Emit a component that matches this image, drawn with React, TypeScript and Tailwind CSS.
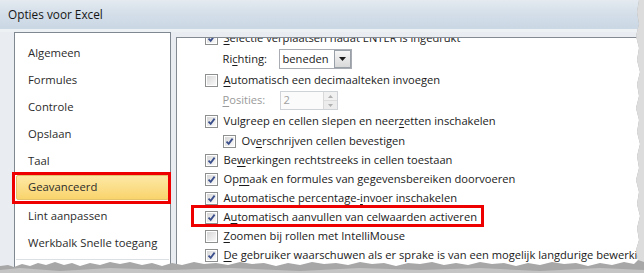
import React from "react";

function Check({ checked }: { checked: boolean }) {
  return (
    <div className="w-[13px] h-[13px] border border-[#8e8f8f] bg-white p-[1px] shrink-0">
      <div className="w-full h-full bg-gradient-to-br from-[#d7d7d7] to-[#fafafa] relative">
        {checked && (
          <svg viewBox="0 0 9 9" className="absolute inset-0 w-[9px] h-[9px]">
            <path d="M1.5 4.6 L3.7 6.8 L7.6 1.6" fill="none" stroke="#3b4f8c" strokeWidth="1.8" />
          </svg>
        )}
      </div>
    </div>
  );
}

function Row({
  checked,
  h,
  indent,
  children,
}: {
  checked: boolean;
  h: string;
  indent?: boolean;
  children: React.ReactNode;
}) {
  return (
    <div className={`flex items-center ${h} ${indent ? "pl-[46px]" : "pl-[28px]"}`}>
      <Check checked={checked} />
      <div className="pl-[6px] whitespace-nowrap">{children}</div>
    </div>
  );
}

const U = ({ children }: { children: React.ReactNode }) => <span className="underline underline-offset-2">{children}</span>;

export default function App() {
  const nav = ["Algemeen", "Formules", "Controle", "Opslaan", "Taal"];
  return (
    <div className="relative w-[644px] h-[273px] overflow-hidden bg-[#e9edf2] font-['Open_Sans',sans-serif] text-[#1a1a1a]">
      {/* title bar */}
      <div className="h-[29px] bg-gradient-to-b from-[#e4eaf0] via-[#d3dee9] to-[#cad7e4] flex items-center pl-[8px] text-[11.8px] text-[#161616]">
        Opties voor Excel
      </div>
      <div className="h-[3px] bg-[#eef1f4]" />
      <div className="flex pl-[14px] gap-[5px]">
        {/* left nav */}
        <div className="relative w-[157px] h-[260px] bg-white border border-[#7f8790] pt-[7px] text-[11.3px] text-[#2b2b2b]">
          {nav.map((n) => (
            <div key={n} className="h-[27px] flex items-center pl-[13px]">
              {n}
            </div>
          ))}
          <div className="h-[28px] px-[1px]">
            <div className="h-[25px] flex items-center pl-[11px] rounded-[2px] border border-[#e3c26b] bg-gradient-to-b from-[#fde8a4] to-[#f9d46c]">
              Geavanceerd
            </div>
          </div>
          <div className="h-[27px] flex items-center pl-[13px]">Lint aanpassen</div>
          <div className="h-[27px] flex items-center pl-[13px]">Werkbalk Snelle toegang</div>
          <div className="mx-[1px] mt-[2px] h-px bg-[#dcdfe3]" />
          <div className="absolute left-[-3px] top-[139px] w-[159px] h-[32px] border-[3px] border-[#ee0000]" />
        </div>
        {/* right panel */}
        <div className="mt-[5px] w-[470px] h-[260px] bg-white border-t border-l border-[#838a92] overflow-hidden text-[11.15px]">
          <div className="mt-[-9px]">
            <Row checked h="h-[19px]">
              <U>S</U>electie verplaatsen nadat ENTER is ingedrukt
            </Row>
            <div className="h-[22px] flex items-center pl-[46px]">
              <div className="w-[56px]">
                Ri<U>c</U>hting:
              </div>
              <div className="flex items-center w-[73px] h-[20px] border border-[#a9acb2] bg-white">
                <div className="flex-1 pl-[3px]">beneden</div>
                <div className="w-[17px] h-[18px] border border-[#9aa0a8] bg-gradient-to-b from-[#f6f6f6] to-[#d9d9d9] flex items-center justify-center">
                  <svg width="7" height="4" viewBox="0 0 7 4">
                    <path d="M0 0 H7 L3.5 4 Z" fill="#1a1a1a" />
                  </svg>
                </div>
              </div>
            </div>
            <Row checked={false} h="h-[20px]">
              <U>A</U>utomatisch een decimaalteken invoegen
            </Row>
            <div className="h-[21px] flex items-center pl-[46px] text-[#9a9a9a]">
              <div className="w-[57px]">
                <U>P</U>osities:
              </div>
              <div className="flex items-center w-[58px] h-[19px] border border-[#cfd2d6] bg-[#fbfbfb]">
                <div className="flex-1 pl-[3px] text-[#a0a0a0]">2</div>
                <div className="w-[14px] h-[17px] flex flex-col border-l border-[#d9d9d9]">
                  <div className="flex-1 flex items-center justify-center bg-[#f1f1f1] border-b border-[#dcdcdc]">
                    <svg width="5" height="3" viewBox="0 0 5 3">
                      <path d="M0 3 H5 L2.5 0 Z" fill="#b0b0b0" />
                    </svg>
                  </div>
                  <div className="flex-1 flex items-center justify-center bg-[#ececec]">
                    <svg width="5" height="3" viewBox="0 0 5 3">
                      <path d="M0 0 H5 L2.5 3 Z" fill="#b0b0b0" />
                    </svg>
                  </div>
                </div>
              </div>
            </div>
            <Row checked h="h-[20px]">
              Vulgreep en cellen slepen en neer<U>z</U>etten inschakelen
            </Row>
            <Row checked h="h-[20px]" indent>
              Ov<U>e</U>rschrijven cellen bevestigen
            </Row>
            <Row checked h="h-[19px]">
              Be<U>w</U>erkingen rechtstreeks in cellen toestaan
            </Row>
            <Row checked h="h-[19px]">
              Op<U>m</U>aak en formules van gegevensbereiken doorvoeren
            </Row>
            <Row checked h="h-[19px]">
              Automatische percentage-<U>i</U>nvoer inschakelen
            </Row>
            <div className="relative">
              <Row checked h="h-[19px]">
                A<U>u</U>tomatisch aanvullen van celwaarden activeren
              </Row>
              <div className="absolute left-[14px] top-[-3px] w-[293px] h-[22px] border-[3px] border-[#ee0000]" />
            </div>
            <Row checked={false} h="h-[19px]">
              <U>Z</U>oomen bij rollen met IntelliMouse
            </Row>
            <Row checked h="h-[19px]">
              <U>D</U>e gebruiker waarschuwen als er sprake is van een mogelijk langdurige bewerking
            </Row>
            <div className="ml-[393px] mt-[4px] w-[58px] h-[20px] border border-[#9a9a9a] rounded-[2px] bg-[#f0f0f0]" />
          </div>
        </div>
      </div>
      {/* torn edge overlay */}
      <svg className="absolute left-0 top-0" width="644" height="273" viewBox="0 0 644 273">
        <path
          d="M0 266 L8 265 L14 267 L22 264 L30 266 L38 263 L46 265 L55 262 L64 265 L72 263 L80 266 L90 263 L100 265 L110 262 L120 264 L130 262 L142 265 L152 263 L162 266 L172 263 L182 265 L194 262 L204 264 L216 263 L228 265 L240 262 L252 264 L264 263 L276 266 L288 263 L300 265 L312 262 L324 264 L336 263 L348 265 L360 262 L372 264 L384 263 L396 266 L408 263 L420 264 L432 262 L444 265 L456 263 L468 265 L480 262 L492 264 L504 263 L516 266 L528 263 L540 265 L552 262 L564 264 L576 263 L588 266 L600 263 L612 265 L624 262 L634 264 L638 260 L636 250 L639 240 L637 228 L640 216 L637 204 L639 192 L636 180 L639 168 L637 156 L640 144 L637 132 L639 120 L636 108 L639 96 L637 84 L640 72 L637 60 L639 48 L636 36 L639 24 L637 12 L639 0 L644 0 L644 273 L0 273 Z"
          fill="#a7a7a7"
        />
        <path
          d="M637 0 L639 0 L637 12 L639 24 L636 36 L639 48 L637 60 L640 72 L637 84 L639 96 L636 108 L639 120 L637 132 L640 144 L637 156 L639 168 L636 180 L639 192 L637 204 L640 216 L637 228 L639 240 L636 250 L638 260 L644 262 L644 0 Z"
          fill="#dcdcdc"
        />
        <path
          d="M0 270 L20 268 L60 271 L110 268 L170 270 L230 268 L300 271 L360 268 L420 270 L480 268 L540 271 L600 268 L644 270 L644 273 L0 273 Z"
          fill="#c4c4c4"
        />
      </svg>
    </div>
  );
}
